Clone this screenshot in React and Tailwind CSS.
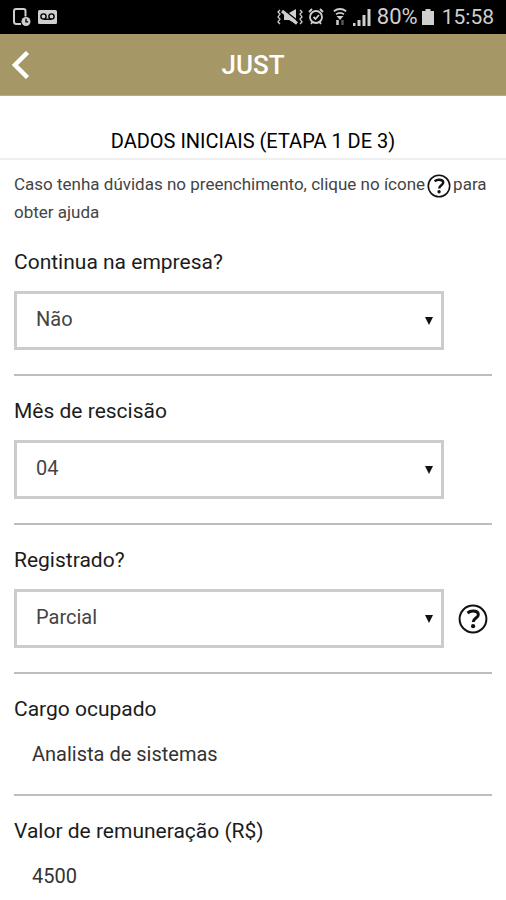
import { useState } from 'react';

function HelpIcon({ className = '' }) {
    return (
        <svg className={className} fill="none" stroke="currentColor" viewBox="0 0 30 30" aria-hidden="true">
            <circle cx="15" cy="15" r="13.4" strokeWidth="2" />
            <path strokeWidth="3" d="M9.500 9c1.500-1.200 3.200-1.900 5.500-1.900 3.300 0 5.300 1.400 5.300 3.600 0 3.200-5.100 3.400-5.100 7.300" />
            <circle cx="15.1" cy="22.200" r="2.100" fill="currentColor" stroke="none" />
        </svg>
    );
}

function StatusBar() {
    return (
        <div className="flex h-[34px] items-center justify-between bg-black px-3 text-[#cfcfcf]">
            <div className="flex items-center gap-[6px]">
                <svg className="h-5 w-5" viewBox="0 0 20 20" fill="none" stroke="currentColor">
                    <path strokeWidth="2" d="M9 17H4.500Q2 17 2 14.500V4Q2 2 4 2H11.500Q13.500 2 13.500 4V9.500" />
                    <circle cx="14" cy="14.500" r="4.500" fill="currentColor" stroke="none" />
                    <path stroke="#000" strokeWidth="1.300" d="M14 11.800v3h2.200" />
                </svg>
                <svg className="h-[14px] w-5" viewBox="0 0 20 14" fill="none">
                    <rect width="19" height="14" rx="1.500" fill="currentColor" />
                    <g stroke="#000" strokeWidth="1.400">
                        <circle cx="5.500" cy="6.500" r="2.600" />
                        <circle cx="13.500" cy="6.500" r="2.600" />
                        <path d="M5.500 9.200h8" />
                    </g>
                </svg>
            </div>

            <div className="flex items-center">
                <svg className="mr-1 h-[18px] w-[26px]" viewBox="0 0 26 18" fill="none" stroke="currentColor">
                    <path fill="currentColor" stroke="none" d="M7 5h5l7-4v15l-7-4H7z" />
                    <path stroke="#000" strokeWidth="1.500" d="M7 2l14 11" />
                    <path strokeWidth="3" d="M5 3l15 12.500" />
                    <path strokeWidth="1.300" d="M3 2L1 4l2 2-2 3 2 2-2 3 2 2M23 2l2 2-2 2 2 3-2 2 2 3-2 2" />
                </svg>
                <svg className="mr-2 h-[18px] w-[18px]" viewBox="0 0 16 18" fill="none" stroke="currentColor" strokeWidth="1.800">
                    <circle cx="8" cy="9" r="6" />
                    <path d="M1 4l3-3M15 4l-3-3M3 16l1.500-2M13 16l-1.500-2M5.500 9l2 2 3.500-4" />
                </svg>
                <svg className="mr-[6px] h-[18px] w-[14px]" viewBox="0 0 14 18" fill="none" stroke="currentColor">
                    <path strokeWidth="1.800" d="M.8 3.200C4.500.6 9.500.6 13.200 3.200M3 6.200c2.600-1.800 5.400-1.800 8 0" />
                    <path fill="currentColor" stroke="none" d="M3.500 8h7L7 12z" />
                    <path strokeWidth="2.500" d="M4.500 12v5" />
                    <path strokeWidth="2.500" stroke="#555" d="M9.500 12v5" />
                </svg>
                <svg className="mr-[6px] h-[18px] w-[18px]" viewBox="0 0 18 18" fill="currentColor">
                    <path d="M0 15h2.500v3H0zM4.500 12h3v6h-3zM9.500 7h3v11h-3zM14.500 1h3v17h-3z" />
                </svg>
                <span className="text-[22px] leading-7">80%</span>
                <svg className="ml-1 mr-2 h-4 w-3" viewBox="0 0 12 16" fill="currentColor">
                    <path d="M3.500 0h5v2H12v14H0V2h3.500z" />
                </svg>
                <span className="text-[21px] leading-7">15:58</span>
            </div>
        </div>
    );
}

function Header() {
    return (
        <header className="grid h-[62px] grid-cols-[48px_1fr_48px] items-center border-b border-[#b9ad86] bg-[#a59766] text-white">
            <button type="button" aria-label="Voltar" className="flex h-full items-center pl-3">
                <svg className="h-7 w-[18px]" fill="none" stroke="currentColor" strokeWidth="4.500" viewBox="0 0 18 28">
                    <path d="M15.500 1.500L3 14l12.500 12.500" />
                </svg>
            </button>
            <h1 className="text-center text-[26px] leading-8 font-medium">JUST</h1>
        </header>
    );
}

function Field({ id, label, children }) {
    return (
        <div className="mb-[21px] border-b-2 border-[#bdbdbd] pb-6 last:border-0">
            <label htmlFor={id} className="mb-[15px] block text-[21px] leading-7 text-[#1c1c1c]">
                {label}
            </label>
            {children}
        </div>
    );
}

function SelectField({ id, label, options, initial, help = false }) {
    const [value, setValue] = useState(initial);

    return (
        <Field id={id} label={label}>
            <div className="grid grid-cols-[1fr_48px] items-center">
                <div className="grid items-center">
                    <select
                        id={id}
                        value={value}
                        onChange={(e) => setValue(e.target.value)}
                        className="col-start-1 row-start-1 h-[59px] w-full appearance-none rounded-none border-[3px] border-[#cccccc] bg-white pl-[19px] pr-8 pb-1 text-xl text-[#444444]"
                    >
                        {options.map((option) => (
                            <option key={option}>{option}</option>
                        ))}
                    </select>
                    <svg className="pointer-events-none col-start-1 row-start-1 mr-[11px] h-2 w-2 justify-self-end" viewBox="0 0 8 8">
                        <path d="M0 0h8L4 8z" fill="#111" />
                    </svg>
                </div>
                {help && (
                    <button type="button" aria-label="Ajuda" className="justify-self-end pr-1 text-[#111]">
                        <HelpIcon className="size-[30px]" />
                    </button>
                )}
            </div>
        </Field>
    );
}

function TextField({ id, label, initial }) {
    const [value, setValue] = useState(initial);

    return (
        <Field id={id} label={label}>
            <input
                id={id}
                type="text"
                value={value}
                onChange={(e) => setValue(e.target.value)}
                className="block h-8 w-full bg-transparent pl-[18px] text-xl text-[#333333] outline-none"
            />
        </Field>
    );
}

export default function App() {
    return (
        <div className="min-h-screen bg-white font-['Roboto',sans-serif]">
            <StatusBar />
            <Header />

            <main>
                <h2 className="border-b-2 border-[#efefef] pt-8 pb-1 text-center text-xl leading-[26px] text-black">
                    DADOS INICIAIS (ETAPA 1 DE 3)
                </h2>

                <form className="px-[14px]">
                    <p className="mt-[10px] mb-[22px] text-[17px] leading-7 text-[#444444]">
                        <span>Caso tenha dúvidas no preenchimento, clique no ícone</span>
                        <HelpIcon className="mx-0.5 inline size-6 text-[#111]" />
                        <span>para</span> <span>obter ajuda</span>
                    </p>

                    <SelectField id="continua" label="Continua na empresa?" options={['Sim', 'Não']} initial="Não" />
                    <SelectField
                        id="mes"
                        label="Mês de rescisão"
                        options={['01', '02', '03', '04', '05', '06', '07', '08', '09', '10', '11', '12']}
                        initial="04"
                    />
                    <SelectField
                        id="registrado"
                        label="Registrado?"
                        options={['Sim', 'Não', 'Parcial']}
                        initial="Parcial"
                        help
                    />
                    <TextField id="cargo" label="Cargo ocupado" initial="Analista de sistemas" />
                    <TextField id="valor" label="Valor de remuneração (R$)" initial="4500" />
                </form>
            </main>
        </div>
    );
}
